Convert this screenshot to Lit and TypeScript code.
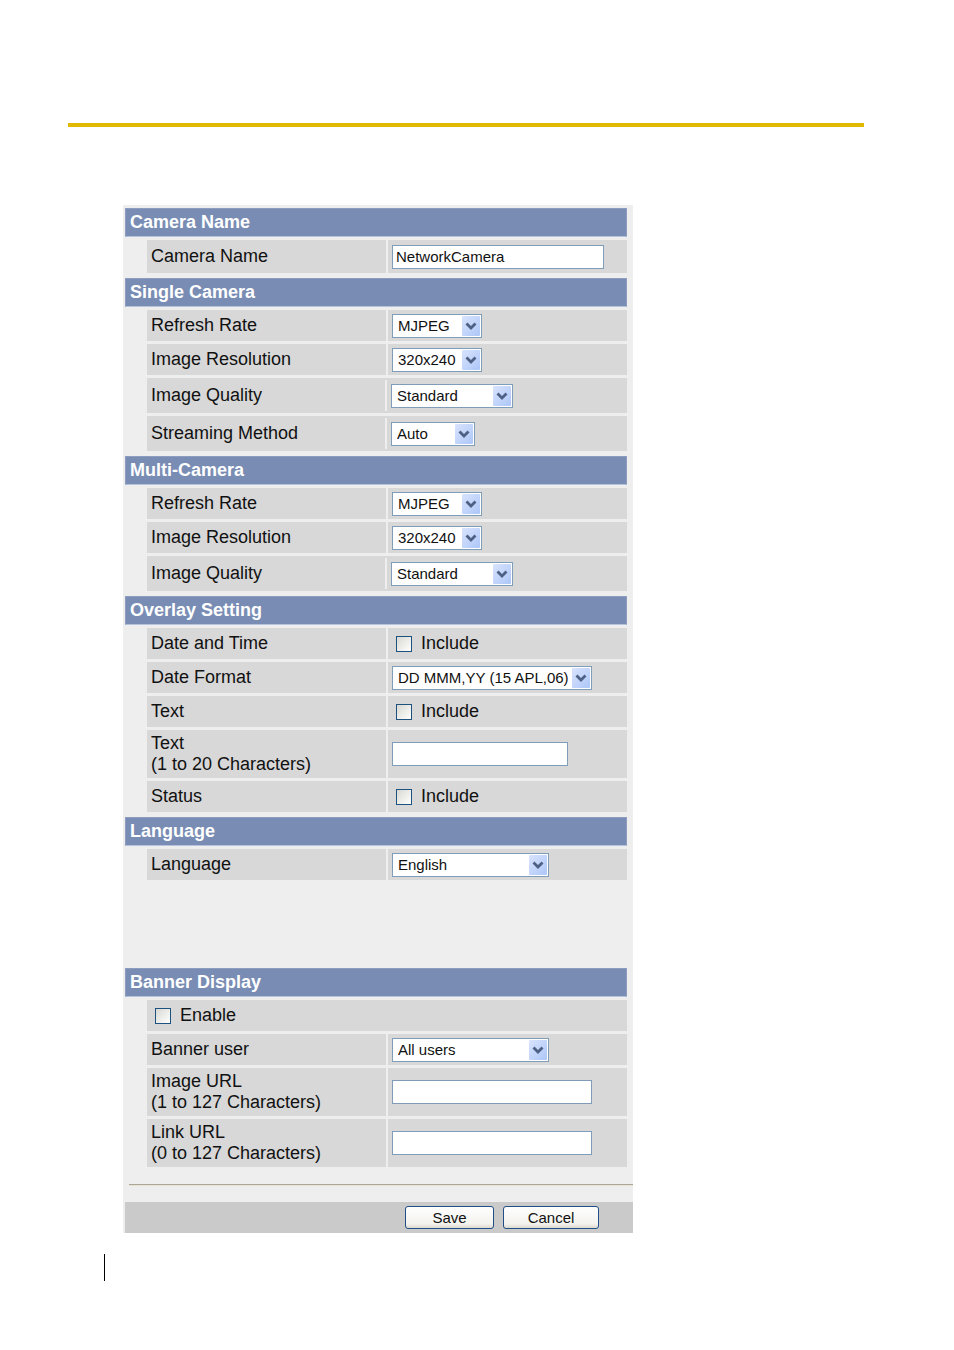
import {LitElement, html, css, nothing} from 'lit';
import {customElement, property} from 'lit/decorators.js';
import {classMap} from 'lit/directives/class-map.js';

interface Field {
  id: string;
  type: 'text' | 'select' | 'check' | 'enable';
  label: string;
  hint?: string;
  value?: string;
  width?: number;
  inset?: boolean;
}

interface Section {
  title: string;
  fields: Field[];
  spaced?: boolean;
}

const SECTIONS: Section[] = [
  {
    title: 'Camera Name',
    fields: [
      { id: 'camera-name', type: 'text', label: 'Camera Name', value: 'NetworkCamera', width: 212 },
    ],
  },
  {
    title: 'Single Camera',
    fields: [
      { id: 'single-rate', type: 'select', label: 'Refresh Rate', value: 'MJPEG', width: 90 },
      { id: 'single-resolution', type: 'select', label: 'Image Resolution', value: '320x240', width: 90 },
      { id: 'single-quality', type: 'select', label: 'Image Quality', value: 'Standard', width: 122, inset: true },
      { id: 'single-streaming', type: 'select', label: 'Streaming Method', value: 'Auto', width: 84, inset: true },
    ],
  },
  {
    title: 'Multi-Camera',
    fields: [
      { id: 'multi-rate', type: 'select', label: 'Refresh Rate', value: 'MJPEG', width: 90 },
      { id: 'multi-resolution', type: 'select', label: 'Image Resolution', value: '320x240', width: 90 },
      { id: 'multi-quality', type: 'select', label: 'Image Quality', value: 'Standard', width: 122, inset: true },
    ],
  },
  {
    title: 'Overlay Setting',
    fields: [
      { id: 'overlay-date', type: 'check', label: 'Date and Time', value: 'Include' },
      { id: 'overlay-format', type: 'select', label: 'Date Format', value: 'DD MMM,YY (15 APL,06)', width: 200 },
      { id: 'overlay-text', type: 'check', label: 'Text', value: 'Include' },
      { id: 'overlay-string', type: 'text', label: 'Text', hint: '(1 to 20 Characters)', value: '', width: 176 },
      { id: 'overlay-status', type: 'check', label: 'Status', value: 'Include' },
    ],
  },
  {
    title: 'Language',
    spaced: true,
    fields: [
      { id: 'language', type: 'select', label: 'Language', value: 'English', width: 157 },
    ],
  },
  {
    title: 'Banner Display',
    fields: [
      { id: 'banner-enable', type: 'enable', label: 'Enable' },
      { id: 'banner-user', type: 'select', label: 'Banner user', value: 'All users', width: 157 },
      { id: 'banner-image', type: 'text', label: 'Image URL', hint: '(1 to 127 Characters)', value: '', width: 200 },
      { id: 'banner-link', type: 'text', label: 'Link URL', hint: '(0 to 127 Characters)', value: '', width: 200 },
    ],
  },
];

@customElement('app-root')
class AppRoot extends LitElement {

  @property({ attribute: false })
  sections = SECTIONS;

  static styles = css`
  :host {
    display: block;
    box-sizing: border-box;
    min-height: 100vh;
    padding: 123px 90px 69px 68px;
    background: white;
    color: #111;
    font: 18px/21px "Liberation Sans", Arial, sans-serif;
  }
  *, *::before {
    box-sizing: border-box;
  }
  .rule {
    height: 4px;
    margin: 0 0 78px;
    border: 0;
    background: #e0b900;
  }
  .panel {
    max-width: 510px;
    margin-left: 55px;
    padding: 3px 0 0 2px;
    background: #eee;
  }
  section {
    margin: 0 6px 5px 0;
  }
  section.spaced {
    margin-bottom: 88px;
  }
  h2 {
    height: 29px;
    margin: 0;
    padding: 0 4px;
    border: solid 1px #8c9dc0;
    border-bottom-color: #b6c3da;
    background: #798db4;
    color: white;
    font-size: 18px;
    line-height: 27px;
  }
  .row {
    display: grid;
    grid-template-columns: 1fr 1fr;
    column-gap: 2px;
    min-height: 31px;
    margin: 3px 0 0 22px;
  }
  .row > * {
    display: flex;
    align-items: center;
    padding: 0 4px;
    background: #d8d8d8;
  }
  .row.field {
    min-height: 33px;
  }
  .row.hinted {
    min-height: 48px;
  }
  .row.single {
    grid-template-columns: 1fr;
  }
  /* the divider stops short of the row's edges */
  .row.inset {
    min-height: 35px;
    padding: 2px 0;
    column-gap: 0;
    background: #d8d8d8;
  }
  .row.inset > label {
    border-right: solid 2px #eee;
  }
  .select {
    position: relative;
    display: block;
  }
  .select svg {
    position: absolute;
    top: 2px;
    right: 2px;
    width: 18px;
    height: 20px;
    pointer-events: none;
  }
  select, input[type=text] {
    display: block;
    height: 24px;
    margin: 0;
    padding: 0 3px;
    border: solid 1px #7f9db9;
    border-radius: 0;
    background: white;
    color: #111;
    font: 15px/20px "Liberation Sans", Arial, sans-serif;
  }
  select {
    width: 100%;
    padding: 0 0 0 5px;
    appearance: none;
  }
  .check {
    display: flex;
    align-items: center;
    gap: 9px;
    padding-left: 4px;
  }
  input[type=checkbox] {
    width: 16px;
    height: 16px;
    margin: 0;
    border: solid 1px #1c5180;
    background: linear-gradient(135deg, #d8d8d2, #fff);
    appearance: none;
  }
  .end {
    height: 2px;
    margin: 17px 0 16px 4px;
    border: 0;
    border-top: solid 1px #aca899;
    border-bottom: solid 1px #e6e3d2;
  }
  footer {
    display: flex;
    align-items: center;
    gap: 9px;
    height: 31px;
    padding-left: 280px;
    background: #cacaca;
  }
  button {
    width: 89px;
    height: 23px;
    padding: 0;
    border: solid 1px #1f4f86;
    border-radius: 3px;
    background: linear-gradient(#fff, #f3f2ee 80%, #dcd9cd);
    color: #111;
    font: 15px/20px "Liberation Sans", Arial, sans-serif;
  }
  button.cancel {
    width: 96px;
  }
  .mark {
    width: 1px;
    height: 27px;
    margin: 21px 0 0 36px;
    background: black;
  }
  `;

  render() {
    return html`
    <hr class="rule">
    <form class="panel" @submit="${this._handleSubmit}">
      ${this.sections.map(
        (section) =>
          html`
            <section class="${classMap({ spaced: !!section.spaced })}">
              <h2>${section.title}</h2>
              ${section.fields.map((field) => this._renderRow(field))}
            </section>
          `
      )}
      <hr class="end">
      <footer>
        <button type="submit">Save</button>
        <button type="reset" class="cancel">Cancel</button>
      </footer>
    </form>
    <div class="mark"></div>
    `;
  }

  private _renderRow(field: Field) {
    if(field.type === 'enable')
      return html`<div class="row single"><div>${this._renderCheck(field.id, field.label)}</div></div>`

    const classes = {
      row: true,
      inset: !!field.inset,
      hinted: !!field.hint,
      field: field.type === 'text' && !field.hint,
    }
    return html`
      <div class="${classMap(classes)}">
        <label for="${field.id}">
          <span>${field.label}${field.hint ? html`<br>${field.hint}` : nothing}</span>
        </label>
        <div>${this._renderControl(field)}</div>
      </div>
    `;
  }

  private _renderControl(field: Field) {
    if(field.type === 'check')
      return this._renderCheck(field.id, field.value)

    if(field.type === 'text')
      return html`<input type="text" id="${field.id}" .defaultValue="${field.value}" style="width: ${field.width}px">`

    return html`
      <span class="select" style="width: ${field.width}px">
        <select id="${field.id}"><option>${field.value}</option></select>
        <svg viewBox="0 0 18 20" aria-hidden="true">
          <defs>
            <linearGradient id="face" x1="0" y1="0" x2="1" y2="1">
              <stop offset="0" stop-color="#d9e3fd"/>
              <stop offset="1" stop-color="#adc7f8"/>
            </linearGradient>
          </defs>
          <rect width="18" height="20" rx="1" fill="url(#face)"/>
          <path d="M4.5 7.5 L9 12 L13.5 7.5" fill="none" stroke="#4d6185" stroke-width="2.8"/>
        </svg>
      </span>
    `;
  }

  private _renderCheck(id: string, text?: string) {
    return html`
      <span class="check">
        <input type="checkbox" id="${id}">
        <label for="${id}">${text}</label>
      </span>
    `;
  }

  private _handleSubmit(e: Event) {
    e.preventDefault()
  }
}
